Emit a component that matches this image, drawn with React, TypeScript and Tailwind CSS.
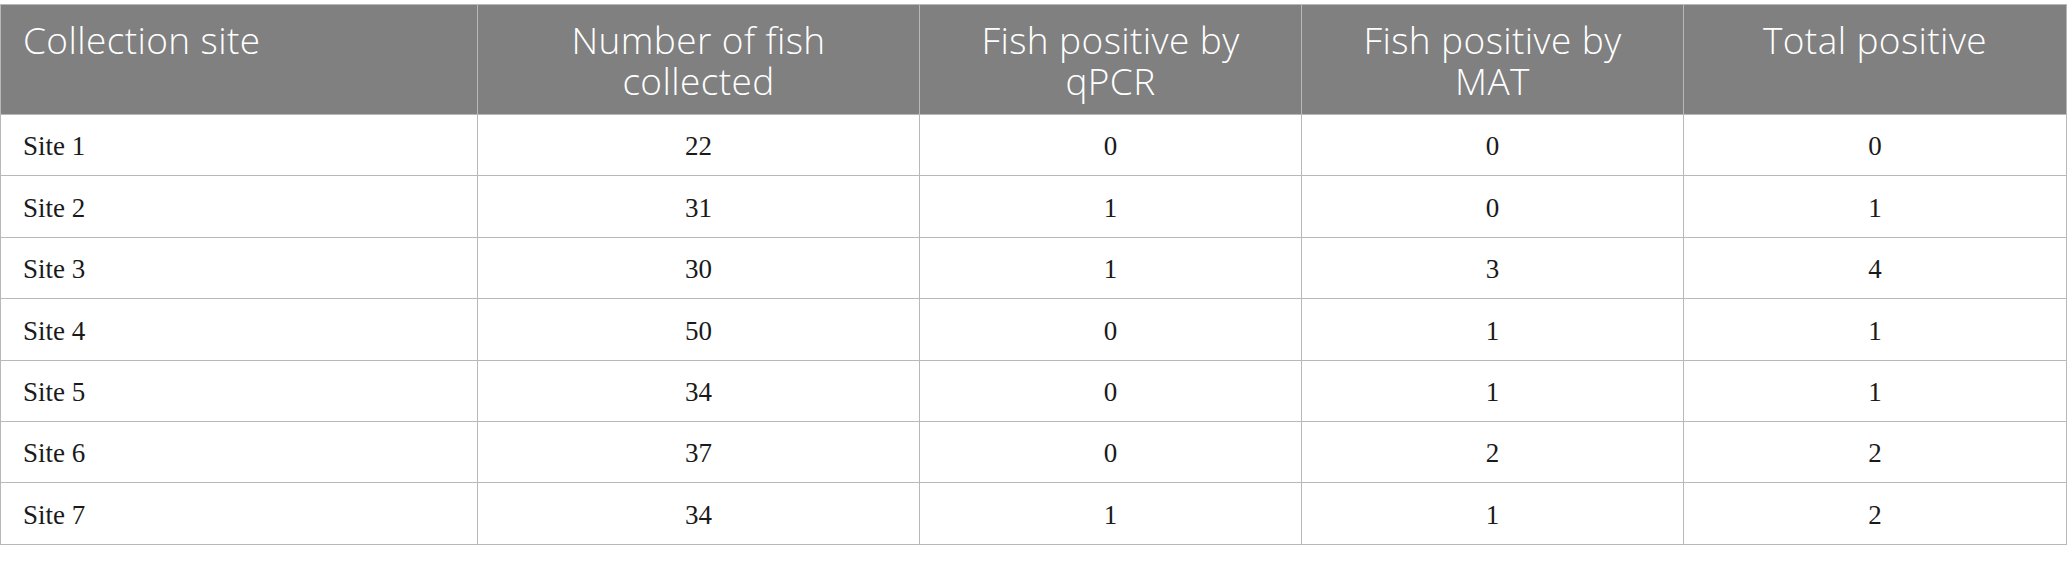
const headers = [
  { label: 'Collection site', align: 'text-left pl-[22px]' },
  { label: 'Number of fish collected', align: 'text-center px-[60px]' },
  { label: 'Fish positive by qPCR', align: 'text-center px-[40px]' },
  { label: 'Fish positive by MAT', align: 'text-center px-[40px]' },
  { label: 'Total positive', align: 'text-center px-[20px]' },
];

const rows = [
  ['Site 1', '22', '0', '0', '0'],
  ['Site 2', '31', '1', '0', '1'],
  ['Site 3', '30', '1', '3', '4'],
  ['Site 4', '50', '0', '1', '1'],
  ['Site 5', '34', '0', '1', '1'],
  ['Site 6', '37', '0', '2', '2'],
  ['Site 7', '34', '1', '1', '2'],
];

export default function App() {
  return (
    <div className="bg-white w-[2067px] h-[563px] pt-[4px]">
      <table className="w-[2066px] table-fixed border-collapse">
        <colgroup>
          <col className="w-[477px]" />
          <col className="w-[442px]" />
          <col className="w-[382px]" />
          <col className="w-[382px]" />
          <col className="w-[383px]" />
        </colgroup>
        <thead>
          <tr className="h-[110px] bg-[#7f807f]">
            {headers.map((h, i) => (
              <th
                key={i}
                className={`${h.align} align-top pt-[14px] border border-[#b8b8b8] font-['Open_Sans',sans-serif] font-[350] text-[37px] tracking-[0.4px] leading-[41px] text-white`}
              >
                {h.label}
              </th>
            ))}
          </tr>
        </thead>
        <tbody>
          {rows.map((row, r) => (
            <tr key={r} className="h-[61.4px]">
              {row.map((cell, c) => (
                <td
                  key={c}
                  className={`${c === 0 ? 'text-left pl-[22px]' : 'text-center'} align-middle pt-[3px] border border-[#b8b8b8] font-['Liberation_Serif',serif] text-[27px] text-[#1a1a1a]`}
                >
                  {cell}
                </td>
              ))}
            </tr>
          ))}
        </tbody>
      </table>
    </div>
  );
}
